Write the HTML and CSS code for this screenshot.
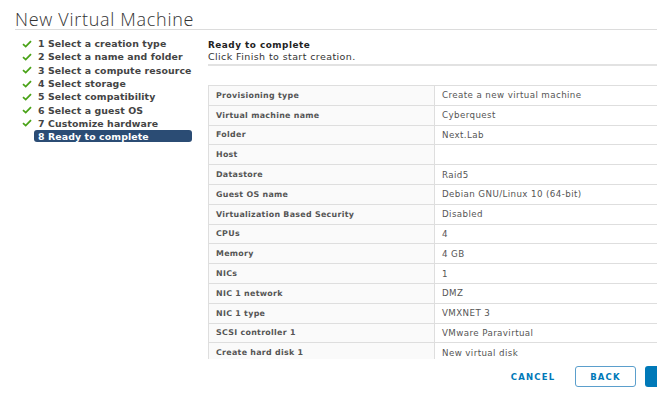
FILE: index.html
```html
<!DOCTYPE html>
<html lang="en">
<head>
    <meta charset="UTF-8">
    <meta name="viewport" content="width=device-width, initial-scale=1.0">
    <title>New Virtual Machine</title>
    <link rel="stylesheet" href="styles.css">
</head>
<body>
    <div class="wizard">
        <h1 class="title">New Virtual Machine</h1>
        <div class="body">
            <ul class="steps">
                <li class="step done"><svg class="check" viewBox="0 0 10 8"><path d="M1 4.2 L3.7 6.6 L9 1.2" /></svg>1 Select a creation type</li>
                <li class="step done"><svg class="check" viewBox="0 0 10 8"><path d="M1 4.2 L3.7 6.6 L9 1.2" /></svg>2 Select a name and folder</li>
                <li class="step done"><svg class="check" viewBox="0 0 10 8"><path d="M1 4.2 L3.7 6.6 L9 1.2" /></svg>3 Select a compute resource</li>
                <li class="step done"><svg class="check" viewBox="0 0 10 8"><path d="M1 4.2 L3.7 6.6 L9 1.2" /></svg>4 Select storage</li>
                <li class="step done"><svg class="check" viewBox="0 0 10 8"><path d="M1 4.2 L3.7 6.6 L9 1.2" /></svg>5 Select compatibility</li>
                <li class="step done"><svg class="check" viewBox="0 0 10 8"><path d="M1 4.2 L3.7 6.6 L9 1.2" /></svg>6 Select a guest OS</li>
                <li class="step done"><svg class="check" viewBox="0 0 10 8"><path d="M1 4.2 L3.7 6.6 L9 1.2" /></svg>7 Customize hardware</li>
                <li class="step active">8 Ready to complete</li>
            </ul>

            <div class="main">
                <div class="page-head">
                    <h2>Ready to complete</h2>
                    <p>Click Finish to start creation.</p>
                </div>
                <div class="scroll">
                    <table class="summary">
                        <tr><th>Provisioning type</th><td>Create a new virtual machine</td></tr>
                        <tr><th>Virtual machine name</th><td>Cyberquest</td></tr>
                        <tr><th>Folder</th><td>Next.Lab</td></tr>
                        <tr><th>Host</th><td></td></tr>
                        <tr><th>Datastore</th><td>Raid5</td></tr>
                        <tr><th>Guest OS name</th><td>Debian GNU/Linux 10 (64-bit)</td></tr>
                        <tr><th>Virtualization Based Security</th><td>Disabled</td></tr>
                        <tr><th>CPUs</th><td>4</td></tr>
                        <tr><th>Memory</th><td>4 GB</td></tr>
                        <tr><th>NICs</th><td>1</td></tr>
                        <tr><th>NIC 1 network</th><td>DMZ</td></tr>
                        <tr><th>NIC 1 type</th><td>VMXNET 3</td></tr>
                        <tr><th>SCSI controller 1</th><td>VMware Paravirtual</td></tr>
                        <tr><th>Create hard disk 1</th><td>New virtual disk</td></tr>
                    </table>
                </div>
                <div class="footer">
                    <button class="btn link">Cancel</button>
                    <button class="btn outline">Back</button>
                    <button class="btn primary">Finish</button>
                </div>
            </div>
        </div>
    </div>
</body>
</html>
```

FILE: styles.css
```css
body {
    margin: 0;
    background-color: #fff;
    font-family: "DejaVu Sans", Arial, sans-serif;
    color: #313131;
    overflow: hidden;
}

.wizard {
    width: 760px;
    padding-left: 15px;
}

.title {
    margin: 0;
    padding-top: 9px;
    height: 20px;
    font-family: "Open Sans", Arial, sans-serif;
    font-size: 18px;
    font-weight: 300;
    line-height: 20px;
    letter-spacing: 0.7px;
    color: #333;
    border-bottom: 1px solid #dcdcdc;
}

.body {
    display: flex;
}

.steps {
    list-style: none;
    margin: 0;
    padding: 7px 0 0 0;
    width: 193px;
    flex-shrink: 0;
}

.step {
    display: flex;
    align-items: center;
    height: 13.3px;
    font-size: 9.4px;
    font-weight: 700;
    letter-spacing: 0.1px;
    color: #444;
    white-space: nowrap;
}

.check {
    width: 10px;
    height: 8px;
    margin: 0 6px 0 7px;
    fill: none;
    stroke: #4aa318;
    stroke-width: 1.8;
}

.step.active {
    margin-left: 19px;
    width: 158px;
    height: 12px;
    padding-left: 4px;
    box-sizing: border-box;
    background-color: #2b4c74;
    color: #fff;
    border-radius: 3px;
}

.main {
    flex: 1;
    display: flex;
    flex-direction: column;
}

.page-head {
    padding-top: 9px;
    height: 25px;
    border-bottom: 2px solid #e2e2e2;
}

.page-head h2 {
    margin: 0;
    font-size: 8.9px;
    font-weight: 700;
    line-height: 12px;
    letter-spacing: 0.5px;
    color: #222;
}

.page-head p {
    margin: 0;
    font-size: 9.5px;
    line-height: 12px;
    letter-spacing: 0.4px;
    color: #333;
}

.scroll {
    margin-top: 19px;
    height: 274px;
    overflow: hidden;
}

.summary {
    width: 100%;
    border-collapse: collapse;
}

.summary th,
.summary td {
    height: 18.8px;
    padding: 0 0 0 7px;
    border: 1px solid #dedede;
    text-align: left;
    vertical-align: middle;
}

.summary th {
    width: 218px;
    background-color: #fafafa;
    font-size: 7.9px;
    font-weight: 700;
    letter-spacing: 0.3px;
    color: #555;
}

.summary td {
    color: #555;
    font-size: 8.7px;
    letter-spacing: 0.4px;
}

.footer {
    display: flex;
    align-items: center;
    padding-top: 7px;
    padding-left: 292px;
    gap: 9px;
}

.btn {
    height: 21px;
    font-family: inherit;
    font-size: 8.5px;
    font-weight: 700;
    letter-spacing: 1.2px;
    text-transform: uppercase;
    border-radius: 3px;
    background: none;
    cursor: pointer;
}

.btn.link {
    border: none;
    color: #0079b8;
    width: 66px;
}

.btn.outline {
    width: 61px;
    border: 1px solid #5b9fcc;
    color: #0079b8;
}

.btn.primary {
    width: 80px;
    border: none;
    background-color: #0079b8;
    color: #fff;
    text-align: left;
    padding-left: 24px;
}
```
